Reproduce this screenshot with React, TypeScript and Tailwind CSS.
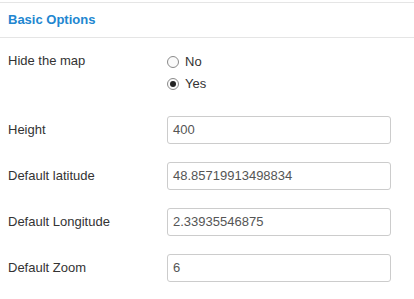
import React from "react";

function Radio({ checked, label }: { checked?: boolean; label: string }) {
  return (
    <div className="flex items-center h-[22px]">
      <span className="w-[12px] h-[12px] rounded-full border border-[#8a8a8a] bg-[#fafafa] flex items-center justify-center shrink-0">
        {checked ? <span className="w-[6px] h-[6px] rounded-full bg-[#222]" /> : null}
      </span>
      <span className="ml-[6px] text-[13px] text-[#333]">{label}</span>
    </div>
  );
}

function Field({ label, value }: { label: string; value: string }) {
  return (
    <div className="flex items-center h-[28px]">
      <div className="w-[159px] text-[13px] text-[#333]">{label}</div>
      <div className="w-[224px] h-[28px] border border-[#cccccc] rounded-[3px] bg-white flex items-center px-[5px] text-[13px] text-[#555]">
        {value}
      </div>
    </div>
  );
}

export default function App() {
  return (
    <div
      className="w-[414px] h-[299px] bg-white overflow-hidden"
      style={{ fontFamily: '"Liberation Sans", Arial, sans-serif' }}
    >
      <div className="mt-[2px] border-t border-b border-[#e5e5e5] h-[36px] flex items-center pl-2">
        <span className="text-[13px] font-bold text-[#2186d0]">Basic Options</span>
      </div>
      <div className="pl-2 pt-[13px]">
        <div className="flex">
          <div className="w-[159px] text-[13px] text-[#333] leading-[20px]">Hide the map</div>
          <div className="flex flex-col">
            <Radio label="No" />
            <Radio checked label="Yes" />
          </div>
        </div>
        <div className="mt-[21px] flex flex-col gap-[18px]">
          <Field label="Height" value="400" />
          <Field label="Default latitude" value="48.85719913498834" />
          <Field label="Default Longitude" value="2.33935546875" />
          <Field label="Default Zoom" value="6" />
        </div>
      </div>
    </div>
  );
}
